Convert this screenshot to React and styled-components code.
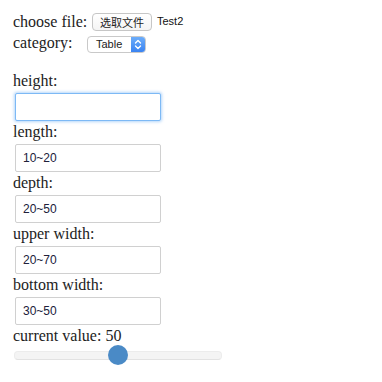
import React from "react";
import styled, { createGlobalStyle } from "styled-components";

const Global = createGlobalStyle`
  html, body { margin: 0; padding: 0; background: #fff; }
  body { font-family: "Liberation Serif", "Times New Roman", serif; font-size: 16px; color: #222; }
`;

const Page = styled.div`
  padding: 11px 0 0 13px;
  display: flex;
  flex-direction: column;
`;

const Row = styled.div`
  height: 21px;
  line-height: 21px;
  display: flex;
  align-items: center;
  white-space: nowrap;
`;

const RowLabel = styled.span`
  width: ${(p) => p.w}px;
  flex: none;
`;

const FileButton = styled.span`
  box-sizing: border-box;
  height: 18px;
  padding: 0 7px;
  border: 1px solid #c6c6c6;
  border-radius: 4px;
  background: linear-gradient(#ffffff, #f4f4f4);
  font-family: "Noto Sans CJK SC", "Liberation Sans", sans-serif;
  font-size: 11px;
  line-height: 16px;
  color: #222;
  display: inline-flex;
  align-items: center;
`;

const FileName = styled.span`
  margin-left: 5px;
  font-family: "Liberation Sans", Arial, sans-serif;
  font-size: 11px;
  color: #111;
`;

const Select = styled.span`
  box-sizing: border-box;
  width: 59px;
  height: 17px;
  margin-top: 3px;
  border: 1px solid #c9c9c9;
  border-radius: 4px;
  background: #fff;
  display: inline-flex;
  align-items: stretch;
  overflow: hidden;
  font-family: "Liberation Sans", Arial, sans-serif;
  font-size: 11px;
  color: #222;
`;

const SelectText = styled.span`
  flex: 1;
  padding-left: 8px;
  line-height: 15px;
`;

const SelectArrow = styled.span`
  width: 14px;
  background: linear-gradient(#6cadfa, #3a83f1);
  display: flex;
  align-items: center;
  justify-content: center;
`;

const Spacer = styled.div`
  height: 18px;
`;

const Field = styled.div`
  display: flex;
  flex-direction: column;
`;

const Label = styled.div`
  height: 20px;
  line-height: 20px;
`;

const Input = styled.div`
  box-sizing: border-box;
  width: 146px;
  height: 28px;
  margin: 2px 0 1px 2px;
  padding-left: 7px;
  border: 1px solid ${(p) => (p.focused ? "#7db9f5" : "#d0d0d0")};
  border-radius: 2px;
  box-shadow: ${(p) => (p.focused ? "0 0 3px 1px rgba(120, 180, 245, 0.55)" : "none")};
  background: #fff;
  font-family: "Liberation Sans", Arial, sans-serif;
  font-size: 12px;
  color: #20203a;
  display: flex;
  align-items: center;
`;

const SliderWrap = styled.div`
  position: relative;
  width: 208px;
  height: 20px;
  margin: -1px 0 0 1px;
  display: flex;
  align-items: center;
`;

const Track = styled.div`
  box-sizing: border-box;
  width: 100%;
  height: 9px;
  margin-top: 1px;
  border: 1px solid #ececec;
  border-bottom-color: #e2e2e2;
  border-radius: 4px;
  background: #f4f4f4;
`;

const Thumb = styled.div`
  position: absolute;
  top: 0;
  width: 20px;
  height: 20px;
  border-radius: 50%;
  background: #4a8ac6;
`;

const fields = [
  { label: "height:", value: "", focused: true },
  { label: "length:", value: "10~20" },
  { label: "depth:", value: "20~50" },
  { label: "upper width:", value: "20~70" },
  { label: "bottom width:", value: "30~50" },
];

export default function App() {
  const value = 50;
  const trackW = 208;
  const thumbLeft = ((trackW - 20) * value) / 100;
  return (
    <>
      <Global />
      <Page>
        <Row>
          <RowLabel w={79}>choose file:</RowLabel>
          <FileButton>选取文件</FileButton>
          <FileName>Test2</FileName>
        </Row>
        <Row>
          <RowLabel w={74}>category:</RowLabel>
          <Select>
            <SelectText>Table</SelectText>
            <SelectArrow>
              <svg width="8" height="11" viewBox="0 0 8 11" fill="none" stroke="#fff" strokeWidth="1.4" strokeLinecap="round" strokeLinejoin="round">
                <path d="M1.5 4 L4 1.5 L6.5 4" />
                <path d="M1.5 7 L4 9.5 L6.5 7" />
              </svg>
            </SelectArrow>
          </Select>
        </Row>
        <Spacer />
        {fields.map((f) => (
          <Field key={f.label}>
            <Label>{f.label}</Label>
            <Input focused={f.focused}>{f.value}</Input>
          </Field>
        ))}
        <Label>current value: {value}</Label>
        <SliderWrap>
          <Track />
          <Thumb style={{ left: thumbLeft }} />
        </SliderWrap>
      </Page>
    </>
  );
}
